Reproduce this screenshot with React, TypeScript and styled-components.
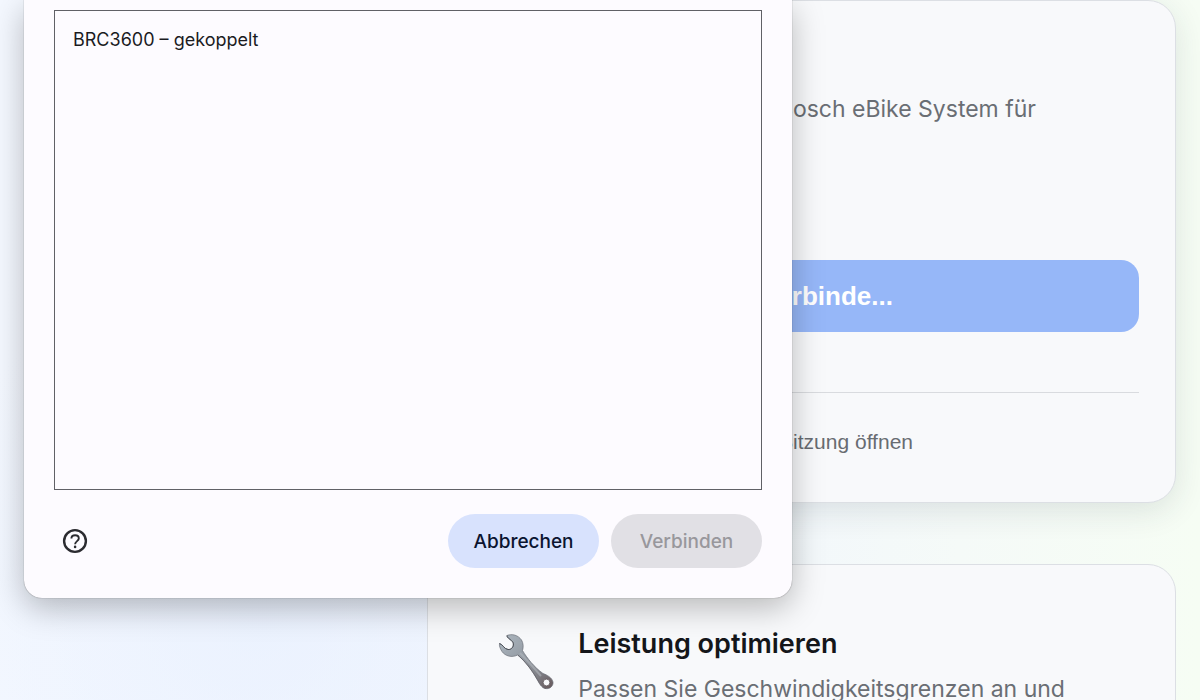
import React from "react";
import styled, { createGlobalStyle } from "styled-components";

const sans = `Inter, "Liberation Sans", sans-serif`;
const arial = `"Liberation Sans", Arial, sans-serif`;

const GlobalStyle = createGlobalStyle`
  *, *::before, *::after { box-sizing: border-box; }
  body { margin: 0; font-family: ${sans}; color: #14161a; }
`;

const Page = styled.div`
  position: relative;
  height: 100vh;
  overflow: hidden;
  background:
    radial-gradient(circle at 22% 88%, rgba(232, 240, 254, 0.7), rgba(232, 240, 254, 0) 32%),
    linear-gradient(90deg, #f4f8ff 0%, #f0f5fe 50%, #f5faf8 80%, #f6fdf4 100%);
`;

const Content = styled.main`
  display: flex;
  flex-direction: column;
  align-items: flex-end;
  gap: 61px;
  padding: 0 24px;
`;

const Card = styled.section`
  width: 65%;
  background: #f8f9fb;
  border: 1px solid #dcdfe4;
  border-radius: 28px;
`;

const ConnectCard = styled(Card)`
  padding: 92px 36px 46px;
  box-shadow: 0 8px 32px rgba(31, 50, 60, 0.12);
`;

const Lead = styled.p`
  margin: 0;
  padding-right: 103px;
  font-size: 23px;
  line-height: 32px;
  text-align: right;
  color: #6a6e74;
`;

const ConnectButton = styled.button`
  display: block;
  width: 100%;
  height: 72px;
  margin-top: 135px;
  padding: 0 246px 0 0;
  border: 0;
  border-radius: 18px;
  background: #96b7f8;
  color: #fff;
  font: 700 26px/32px ${arial};
  text-align: right;
`;

const Divider = styled.hr`
  margin: 60px 0 0;
  border: 0;
  border-top: 1px solid #d9dbdf;
`;

const SessionRow = styled.div`
  display: flex;
  justify-content: flex-end;
  padding: 35px 226px 0 0;
`;

const SessionLink = styled.a`
  color: #686c72;
  font: 400 21px/28px ${arial};
  text-decoration: none;
`;

const FeatureCard = styled(Card)`
  display: flex;
  gap: 20px;
  padding: 61px 36px 60px 68px;
`;

const FeatureIcon = styled.svg`
  flex: none;
  width: 62px;
  height: 62px;
  margin-top: 5px;
`;

const FeatureTitle = styled.h2`
  margin: 0 0 9px;
  font-size: 27px;
  font-weight: 600;
  line-height: 36px;
`;

const FeatureText = styled.p`
  margin: 0;
  font-size: 23px;
  line-height: 36px;
  color: #6a6e74;
`;

const Dialog = styled.div`
  position: absolute;
  top: 0;
  left: 24px;
  width: 64%;
  padding: 10px 30px 30px;
  background: #fdfbff;
  border-radius: 0 0 18px 18px;
  box-shadow: 0 0 1px rgba(0, 0, 0, 0.6), 0 10px 32px rgba(0, 0, 0, 0.26);
`;

const DeviceList = styled.ul`
  height: 480px;
  margin: 0;
  padding: 16px 18px;
  border: 1px solid #606066;
  list-style: none;
`;

const Device = styled.li`
  font-size: 18px;
  line-height: 26px;
  color: #1b1b1f;
`;

const DialogFooter = styled.div`
  display: flex;
  align-items: center;
  gap: 12px;
  margin-top: 24px;
`;

const HelpButton = styled.button`
  display: flex;
  margin: 0 auto 0 8px;
  padding: 0;
  border: 0;
  background: none;
`;

const PillButton = styled.button<{ $muted?: boolean }>`
  width: 151px;
  height: 54px;
  padding: 2px 0 0;
  border: 0;
  border-radius: 27px;
  background: ${(p) => (p.$muted ? "#e1e0e5" : "#d8e2fd")};
  color: ${(p) => (p.$muted ? "#98979c" : "#0b1430")};
  font: 500 19px/26px ${sans};
`;

function Wrench() {
  return (
    <FeatureIcon viewBox="0 0 62 62" aria-hidden="true">
      <defs>
        <linearGradient id="steel" x1="8" y1="8" x2="52" y2="58" gradientUnits="userSpaceOnUse">
          <stop offset="0" stopColor="#a9b3bc" />
          <stop offset="0.4" stopColor="#949ba3" />
          <stop offset="0.75" stopColor="#7f7f85" />
          <stop offset="1" stopColor="#6a5d60" />
        </linearGradient>
      </defs>
      <path
        d="M11 4.500C16 2.500 22 4 25.500 9C27.500 12.500 27.500 16 26.500 19.500C31 27 38 36 47 42.500C51 44 56 46.500 57 51C57.500 55 53.500 58.500 49.500 57.500C45.500 56.500 43.500 52 41 48C36 39 29 30 21.500 24C16 27 9 25 6 20.500C4 17.500 3 14.500 3.500 12.500C6.500 13 8 18 12 18.500C15.500 19 18.500 15 17 11.500C15.500 8.500 11 7.500 11 4.500Z"
        fill="url(#steel)"
        stroke="#6b7078"
        strokeWidth="0.700"
      />
      <path d="M24 22C31 29 38 37 45 45" fill="none" stroke="#b4b9c0" strokeWidth="2" opacity="0.55" />
      <path d="M22 24C30 31 37 41 41.500 49C44 54 46.500 57.500 50 57.500" fill="none" stroke="#56535a" strokeWidth="1" opacity="0.6" />
      <path d="M11 4.500C11 7.500 15.500 8.500 17 11.500C18.500 15 15.500 19 12 18.500C8 18 6.500 13 3.500 12.500" fill="none" stroke="#4a4e55" strokeWidth="1" />
      <circle cx="50.500" cy="51.500" r="3.400" fill="#f8f9fb" stroke="#5a5256" strokeWidth="0.800" />
    </FeatureIcon>
  );
}

export default function App() {
  return (
    <Page>
      <GlobalStyle />
      <Content>
        <ConnectCard>
          <Lead>Bosch eBike System für</Lead>
          <ConnectButton type="button">Verbinde...</ConnectButton>
          <Divider />
          <SessionRow>
            <SessionLink href="#sitzung">Sitzung öffnen</SessionLink>
          </SessionRow>
        </ConnectCard>
        <FeatureCard>
          <Wrench />
          <div>
            <FeatureTitle>Leistung optimieren</FeatureTitle>
            <FeatureText>Passen Sie Geschwindigkeitsgrenzen an und</FeatureText>
          </div>
        </FeatureCard>
      </Content>
      <Dialog role="dialog" aria-label="Gerät verbinden">
        <DeviceList>
          <Device>BRC3600 – gekoppelt</Device>
        </DeviceList>
        <DialogFooter>
          <HelpButton type="button" aria-label="Hilfe">
            <svg width="26" height="26" viewBox="0 0 26 26" fill="none" stroke="#2b2b30">
              <circle cx="13" cy="13" r="10.900" strokeWidth="2.400" />
              <path d="M9.400 10.600C9.400 8.500 11 7.300 13.100 7.300C15.300 7.300 16.800 8.600 16.800 10.500C16.800 13 13.100 13.300 13.100 16.200" strokeWidth="1.900" />
              <circle cx="13.100" cy="18.900" r="1.300" fill="#2b2b30" stroke="none" />
            </svg>
          </HelpButton>
          <PillButton type="button">Abbrechen</PillButton>
          <PillButton type="button" $muted disabled>Verbinden</PillButton>
        </DialogFooter>
      </Dialog>
    </Page>
  );
}
